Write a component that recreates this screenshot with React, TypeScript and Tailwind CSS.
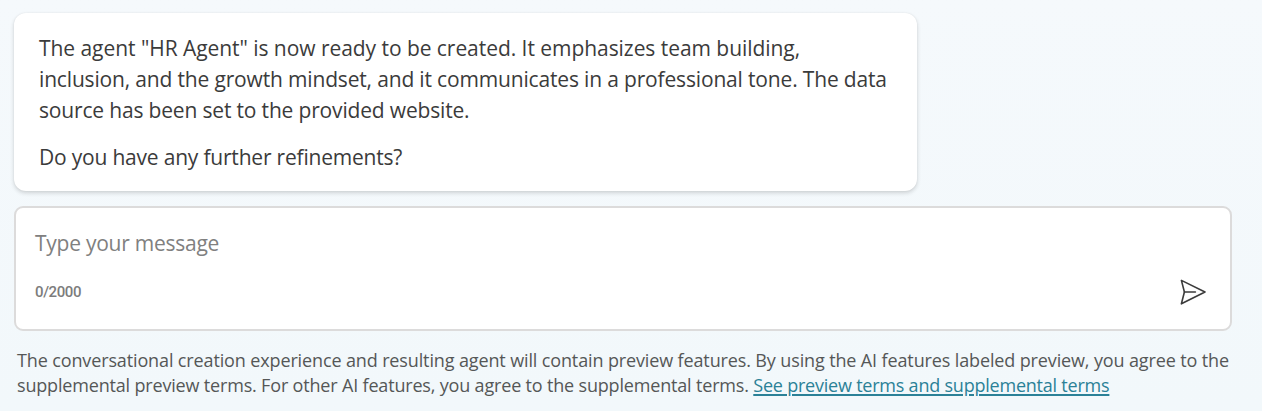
const messageLines = [
  { text: 'The agent "HR Agent" is now ready to be created. It emphasizes team building,', tracking: 'tracking-[-0.05px]' },
  { text: 'inclusion, and the growth mindset, and it communicates in a professional tone. The data', tracking: 'tracking-[-0.165px]' },
  { text: 'source has been set to the provided website.', tracking: 'tracking-[-0.17px]' },
];

function SendIcon() {
  return (
    <svg width="28" height="28" viewBox="0 0 28 28" fill="none" stroke="#3c3c3c" strokeWidth="1.6" strokeLinejoin="round" strokeLinecap="round">
      <path d="M3.4 2.4 27 14 3.4 25.8 6.4 14Z" />
      <path d="M6.4 14H17.4" />
    </svg>
  );
}

export default function App() {
  return (
    <main className="flex h-[411px] w-[1262px] flex-col overflow-hidden bg-linear-to-b from-[#f5f9fc] to-[#f2f8fb] pt-[13px] pl-[14px] font-['Open_Sans','Noto_Sans',sans-serif] text-[#3b3b3b]">
      <section className="h-[178px] w-[903px] rounded-xl bg-white pt-[20px] pl-[25px] text-[21px] leading-[31px] shadow-[0_2px_4px_rgba(0,0,0,0.16),0_0_2px_rgba(0,0,0,0.06)]">
        <p className="whitespace-nowrap">
          {messageLines.map((line) => (
            <span key={line.text} className={`block w-max ${line.tracking}`}>{line.text}</span>
          ))}
        </p>
        <p className="mt-[16px] w-max tracking-[-0.2px]">Do you have any further refinements?</p>
      </section>
      <section className="mt-[15px] flex h-[125px] w-[1218px] flex-col rounded-[9px] border-2 border-[#dcdbdb] bg-white pt-[20px] pr-[24px] pl-[19px]">
        <p className="w-max text-[21px] leading-[31px] tracking-[-0.25px] text-[#808080]">Type your message</p>
        <div className="mt-[19px] flex items-center justify-between">
          <span className="font-[Roboto,sans-serif] text-[15px] leading-[28px] font-medium tracking-[-0.4px] text-[#7c7c7c]">0/2000</span>
          <button aria-label="Send"><SendIcon /></button>
        </div>
      </section>
      <footer className="mt-[17px] ml-[3px] text-[18px] leading-[25px] whitespace-nowrap text-[#555757]">
        <p className="w-max tracking-[-0.13px]">The conversational creation experience and resulting agent will contain preview features. By using the AI features labeled preview, you agree to the</p>
        <p className="w-max tracking-[-0.175px]">supplemental preview terms. For other AI features, you agree to the supplemental terms. <a href="#" className="tracking-[-0.22px] text-[#2b8197] underline decoration-[1.5px] underline-offset-2">See preview terms and supplemental terms</a></p>
      </footer>
    </main>
  );
}
